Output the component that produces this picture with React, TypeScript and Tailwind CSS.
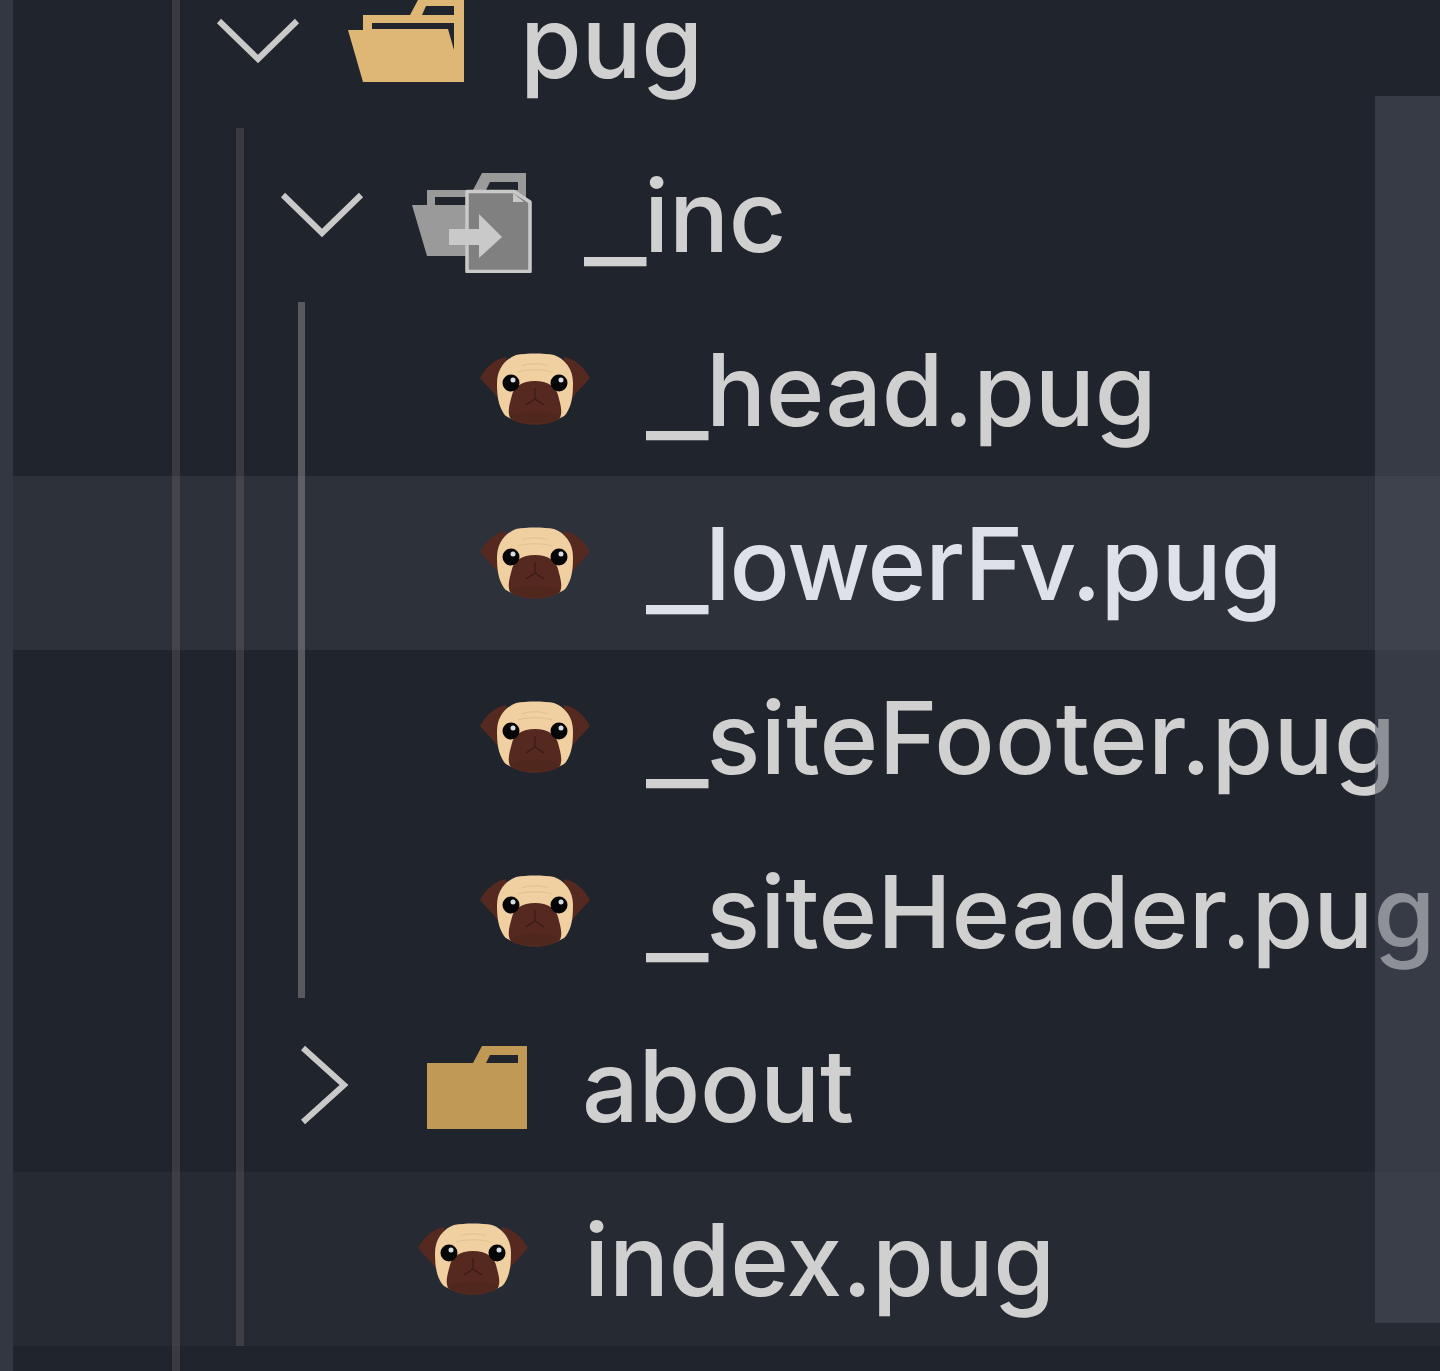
import React from "react";

function Chevron({ open }: { open: boolean }) {
  return (
    <svg width="90" height="90" viewBox="0 0 90 90" className="block shrink-0">
      <path
        d={open ? "M6 25 L45 63 L84 25" : "M26 8 L67 45 L26 82"}
        fill="none"
        stroke="#c9c9c9"
        strokeWidth="6"
      />
    </svg>
  );
}

function OpenFolder() {
  return (
    <svg width="120" height="90" viewBox="0 0 120 90" className="mb-2 block shrink-0 overflow-visible">
      <path
        fill="#deb776"
        d="M0 38 L15 90 L116 90 L116 8 L70 8 L62 23 L15 23 L15 38 Z"
      />
      <path fill="#20242c" d="M24 31 L106 31 L106 58 L100 37 L24 37 Z" />
      <path fill="#20242c" d="M78 14 L106 14 L106 23 L74 23 Z" />
    </svg>
  );
}

function GreyFolder() {
  return (
    <svg width="120" height="101" viewBox="0 0 120 101" className="mt-[14px] block shrink-0">
      <path fill="#9a9a9a" d="M0 33 L15 84 L70 84 L70 30 L114 30 L114 1 L70 1 L61 18 L15 18 L15 33 Z" />
      <path fill="#20242c" d="M23 25 L55 25 L55 33 L23 33 Z" />
      <path fill="#20242c" d="M78 10 L106 10 L106 18 L74 18 Z" />
      <path
        fill="#808080"
        stroke="#c9c9c9"
        strokeWidth="3.500"
        strokeLinejoin="round"
        d="M55 19.500 L102 19.500 L118 30 L118 99.500 L55 99.500 Z"
      />
      <path fill="#c9c9c9" d="M101 21 L101 30 L112 30 Z" />
      <path fill="#c9c9c9" d="M37 57 L67 57 L67 42 L90 65 L67 86 L67 73 L37 73 Z" />
    </svg>
  );
}

function ClosedFolder() {
  return (
    <svg width="120" height="84" viewBox="0 0 120 84" className="mt-1 block shrink-0">
      <path fill="#c09a55" d="M15 18 L61 18 L70 1 L115 1 L115 84 L15 84 Z" />
      <path fill="#20242c" d="M78 10 L106 10 L106 18 L74 18 Z" />
    </svg>
  );
}

function Pug() {
  return (
    <svg width="120" height="72" viewBox="-5 0 120 72" className="block shrink-0">
      <path fill="#55291f" d="M26 4 C15 6 6 14 0 25 C6 32 12 37 19 47 L28 30 Z" />
      <path fill="#55291f" d="M84 4 C95 6 104 14 110 25 C104 32 98 37 91 47 L82 30 Z" />
      <path
        fill="#f0cfa1"
        d="M36 2 C46 0 64 0 74 2 C85 6 93 16 93 30 C93 42 92 52 86 61 C78 72 32 72 24 61 C18 52 17 42 17 30 C17 16 25 6 36 2 Z"
      />
      <path fill="none" stroke="#e2bf8e" strokeWidth="1" d="M42 13 C48 10 62 10 68 13 M38 19 C46 16 64 16 72 19" />
      <path
        fill="#55291f"
        d="M55 28 C42 28 34 34 32 42 C30 50 27 58 30 65 C40 74 70 74 80 65 C83 58 80 50 78 42 C76 34 68 28 55 28 Z"
      />
      <path fill="#4f271d" d="M30 64 C42 57 68 57 80 64 C72 72 38 72 30 64 Z" />
      <path fill="none" stroke="#3a1b14" strokeWidth="1.200" d="M55 35 L55 46 M46 52 L55 46 L64 52" />
      <circle cx="31" cy="30" r="8.500" fill="#050505" />
      <circle cx="79" cy="30" r="8.500" fill="#050505" />
      <circle cx="33" cy="27" r="2.500" fill="#d8dde2" />
      <circle cx="81" cy="27" r="2.500" fill="#d8dde2" />
    </svg>
  );
}

type RowProps = {
  indent: string;
  gap: string;
  chevron?: "open" | "closed";
  icon: React.ReactNode;
  label: string;
  rowClass?: string;
  textClass?: string;
};

function Row({
  indent,
  gap,
  chevron,
  icon,
  label,
  rowClass = "",
  textClass = "text-[#d0d0d0] tracking-[-0.3px]",
}: RowProps) {
  const hasUnderscore = label.startsWith("_");
  return (
    <div className={`flex h-[174px] items-center whitespace-nowrap ${indent} ${rowClass}`}>
      {chevron ? (
        <div className="mr-[45px]">
          <Chevron open={chevron === "open"} />
        </div>
      ) : null}
      <div className="flex w-[120px] shrink-0 items-center justify-center">{icon}</div>
      <span className={`${gap} mt-0.5 text-[100px] leading-[80px] font-[450] ${textClass}`}>
        {hasUnderscore ? (
          <span className="mr-[14px] inline-block origin-left translate-y-[5px] scale-x-[1.35]">_</span>
        ) : null}
        {hasUnderscore ? label.slice(1) : label}
      </span>
    </div>
  );
}

export default function App() {
  return (
    <div className="relative h-[1371px] w-[1440px] overflow-hidden bg-[#20242c] font-['Inter','Liberation_Sans',sans-serif]">
      <div className="-mt-[46px] pl-[13px]">
        <Row indent="pl-[200px]" gap="ml-[52px]" chevron="open" icon={<OpenFolder />} label="pug" />
        <Row indent="pl-[264px]" gap="ml-[52px]" chevron="open" icon={<GreyFolder />} label="_inc" />
        <Row indent="pl-[462px]" gap="ml-[51px]" icon={<Pug />} label="_head.pug" />
        <Row
          indent="pl-[462px]"
          gap="ml-[51px]"
          icon={<Pug />}
          label="_lowerFv.pug"
          rowClass="bg-[#2d313a]"
          textClass="text-[#dfe1e8] tracking-[-1px]"
        />
        <Row
          indent="pl-[462px]"
          gap="ml-[51px]"
          icon={<Pug />}
          label="_siteFooter.pug"
          textClass="text-[#d0d0d0] tracking-[0.3px]"
        />
        <Row
          indent="pl-[462px]"
          gap="ml-[51px]"
          icon={<Pug />}
          label="_siteHeader.pug"
          textClass="text-[#d0d0d0] tracking-normal"
        />
        <Row indent="pl-[264px]" gap="ml-[50px]" chevron="closed" icon={<ClosedFolder />} label="about" />
        <Row indent="pl-[400px]" gap="ml-[51px]" icon={<Pug />} label="index.pug" rowClass="bg-[#262a32]" />
      </div>

      <div className="absolute top-0 left-0 h-full w-[13px] bg-[#323742]" />
      <div className="absolute top-0 left-[172px] h-full w-[8px] bg-[#8a8078]/25" />
      <div className="absolute top-[128px] left-[236px] h-[1218px] w-[8px] bg-[#8a8078]/25" />
      <div className="absolute top-[302px] left-[298px] h-[696px] w-[7px] bg-[#919090]/50" />
      <div className="absolute top-[96px] left-[1375px] h-[1227px] w-[65px] bg-[#4c5261]/[0.51]" />
    </div>
  );
}
